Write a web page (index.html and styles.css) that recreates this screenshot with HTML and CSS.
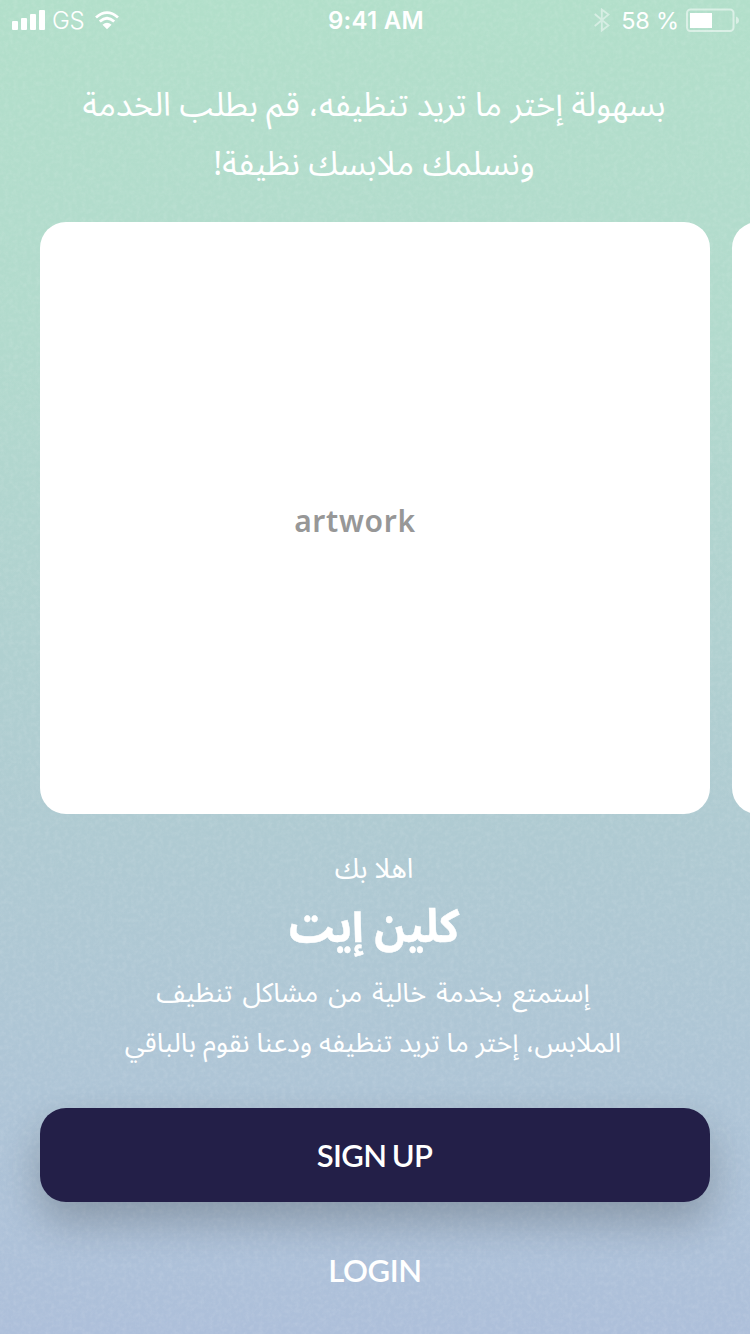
FILE: index.html
```html
<!DOCTYPE html>
<html lang="ar">
<head>
<meta charset="utf-8">
<title>Clean it</title>
<link rel="stylesheet" href="styles.css">
</head>
<body>
<main class="screen">
  <svg class="paper" width="750" height="1334" aria-hidden="true">
    <filter id="grain" x="0" y="0" width="100%" height="100%"><feTurbulence type="fractalNoise" baseFrequency="0.22" numOctaves="3" seed="4"/><feColorMatrix values="0 0 0 0 1  0 0 0 0 1  0 0 0 0 1  1.2 0 0 0 -.45"/></filter>
    <rect width="750" height="1334" filter="url(#grain)"/>
  </svg>
  <header class="status">
    <div class="status-side">
      <svg class="signal" width="34" height="20" viewBox="0 0 34 20" fill="#fff"><rect x="1" y="11" width="6" height="9" rx="1"/><rect x="10" y="8" width="6" height="12" rx="1"/><rect x="19" y="4" width="6" height="16" rx="1"/><rect x="28" y="0" width="6" height="20" rx="1"/></svg>
      <span class="carrier">GS</span>
      <svg class="wifi" width="24" height="19" viewBox="0 0 24 19" fill="none" stroke="#fff" stroke-width="2.8"><path d="M1 6.500Q12-3.200 23 6.500M4.800 10.500Q12 4 19.200 10.500"/><path d="M7.500 13.800Q12 9.800 16.500 13.800L12 18.300Z" fill="#fff" stroke="none"/></svg>
    </div>
    <span class="time">9:41 AM</span>
    <div class="status-side status-right">
      <svg class="bluetooth" width="16" height="24" viewBox="0 0 16 24" fill="none" stroke="#fff" stroke-width="1.800"><path d="M.8 6L14.500 17.500L7.800 22.500V1.500L14.500 6.500L.8 18"/></svg>
      <span class="percent">58 %</span>
      <svg class="battery" width="53" height="24" viewBox="0 0 53 24"><rect x="1" y="1.500" width="46.500" height="21.500" rx="3.500" fill="none" stroke="#fff" stroke-opacity=".5" stroke-width="2"/><rect x="4" y="5" width="22" height="15" fill="#fff"/><path d="M50 8.500Q53 9.500 53 12.500Q53 15 50 16Z" fill="#fff" fill-opacity=".5"/></svg>
    </div>
  </header>
  <p class="headline" dir="rtl"><span class="headline-first">بسهولة إختر ما تريد تنظيفه، قم بطلب الخدمة</span><br>ونسلمك ملابسك نظيفة!</p>
  <section class="carousel">
    <div class="card"><span class="artwork">artwork</span></div>
    <div class="card"></div>
  </section>
  <p class="welcome" dir="rtl">اهلا بك</p>
  <h1 class="brand" dir="rtl">كلين إيت</h1>
  <p class="intro" dir="rtl"><span class="intro-first">إستمتع بخدمة خالية من مشاكل تنظيف</span><br>الملابس، إختر ما تريد تنظيفه ودعنا نقوم بالباقي</p>
  <button class="signup">SIGN UP</button>
  <a class="login">LOGIN</a>
</main>
</body>
</html>
```
FILE: styles.css
```css
* { box-sizing: border-box; }
body { margin: 0; }
.screen {
  position: relative; isolation: isolate;
  width: 750px; height: 1334px; overflow: hidden;
  display: flex; flex-direction: column; align-items: center;
  color: #fff; font-family: "Noto Sans", "Noto Sans Arabic", "DejaVu Sans", sans-serif;
  background: linear-gradient(#b2dfca, #b2dacd 25%, #afcad2 63%, #adbfda);
}
.paper { position: absolute; inset: 0; z-index: -1; opacity: .16; }
p, h1 { margin: 0; text-align: center; white-space: nowrap; }
.status { width: 100%; height: 40px; padding: 0 11px; display: grid; grid-template-columns: 1fr auto 1fr; align-items: center; font: 24px Inter, sans-serif; }
.status-side { display: flex; align-items: center; }
.carrier { margin: 0 11px 0 7px; font-weight: 300; letter-spacing: -.3px; }
.status-right { justify-content: flex-end; }
.percent { margin: 0 7px 0 11px; font-size: 23.500px; font-weight: 400; letter-spacing: -.2px; }
.bluetooth { opacity: .45; }
.time { margin-left: 2px; font-weight: 600; letter-spacing: .3px; }
.headline { height: 117px; margin: 34px 2px 0 0; font-size: 33.300px; line-height: 58px; }
.headline-first { font-size: 33px; }
.carousel { width: 100%; height: 592px; margin-top: 31px; padding-left: 40px; display: flex; gap: 22px; overflow: hidden; flex-shrink: 0; }
.card { flex: 0 0 670px; background: #fff; border-radius: 26px; display: flex; align-items: center; justify-content: center; }
.artwork { color: #979797; font: 600 30px "Noto Sans", sans-serif; letter-spacing: .7px; margin: 4px 40px 0 0; }
.welcome { margin: 29px 2px 0 0; font-size: 27.500px; line-height: 50px; }
.brand { margin-right: 2px; font-size: 46px; line-height: 62px; transform: scaleX(.915); -webkit-text-stroke: .5px #fff; }
.intro { margin: 12px 4px 0 0; font-size: 27px; line-height: 50px; }
.intro-first { word-spacing: 3px; }
.signup { flex-shrink: 0; width: 670px; height: 94px; margin-top: 41px; padding: 0 1px 1px 0; border: 0; border-radius: 26px; background: #231f48; color: #fff; font: 600 31px Lato, sans-serif; letter-spacing: -.6px; word-spacing: -2px; box-shadow: 0 20px 40px rgba(0,0,0,.22); }
.login { margin-top: 50px; font: 600 31px/36px Lato, sans-serif; letter-spacing: -.4px; }
```
